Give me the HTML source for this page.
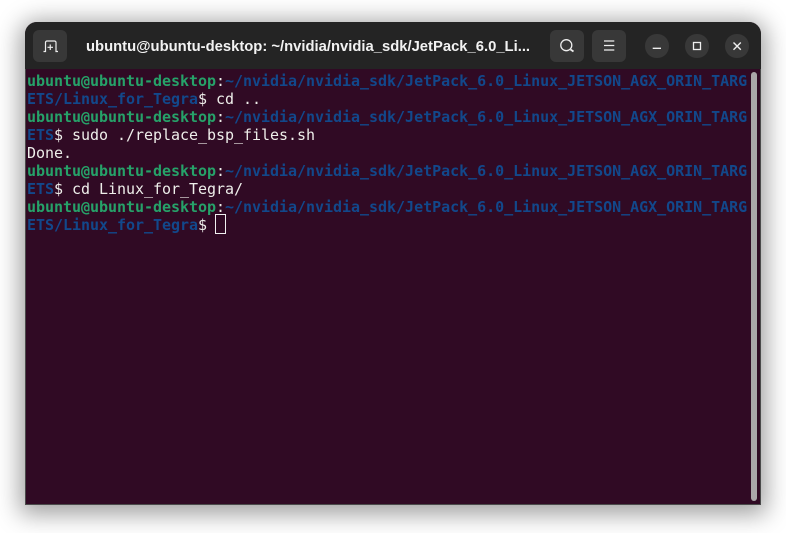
<!DOCTYPE html>
<html><head><meta charset="utf-8">
<style>
html,body{margin:0;padding:0;background:#fff;width:786px;height:533px;overflow:hidden}
.win{position:absolute;left:25px;top:22px;width:736px;height:483px;border-radius:12px 12px 0 0;background:#300a24;box-shadow:0 4px 24px 5px rgba(0,0,0,.38);overflow:hidden}
.edge{position:absolute;left:0;top:47px;width:734px;height:435px;border:1px solid #4a4a4a;border-top:0}
.bar{position:absolute;left:0;top:0;width:736px;height:47px;background:#242424}
.btn{position:absolute;top:8px;width:34px;height:32px;background:#383838;border-radius:6px}
.c{position:absolute;top:12.3px;width:23.4px;height:23.4px;border-radius:50%;background:#383838}
svg{position:absolute;left:0;top:0}
.title{position:absolute;left:61px;top:16px;width:450px;font:bold 14.8px/18px "Liberation Sans",sans-serif;color:#f2f2f2;white-space:nowrap}
pre{position:absolute;left:2px;top:50px;margin:0;font:15px/18px "DejaVu Sans Mono","Liberation Mono",monospace;letter-spacing:-.03px;color:#eeeeea;white-space:pre}
b.g{color:#26a269;font-weight:bold}
b.b{color:#12488b;font-weight:bold}
.cur{position:absolute;left:190px;top:192px;width:9px;height:18px;border:1px solid #f0f0f0}
.sb{position:absolute;left:726px;top:50px;width:6px;height:429px;border-radius:3px;background:#aaa6a9}
</style></head><body>
<div class="win">
<div class="bar"></div>
<div class="edge"></div>
<div class="btn" style="left:8px"></div>
<div class="btn" style="left:525px"></div>
<div class="btn" style="left:567px"></div>
<div class="c" style="left:620.3px"></div>
<div class="c" style="left:660.3px"></div>
<div class="c" style="left:700.3px"></div>
<svg width="736" height="47" fill="none" stroke="#eeeeee" stroke-width="1.200">
<path d="M18.500 29.500h2V20.500a1.500 1.500 0 0 1 1.500-1.500h7.500a1.500 1.500 0 0 1 1.500 1.500v9h2"/>
<path d="M22.500 25.300h5.500M25.250 22.500v5.500"/>
<circle cx="541.300" cy="23.200" r="5.500" stroke-width="1.300"/>
<path d="M545.500 27.500l3 2" stroke-width="1.800"/>
<path d="M579 19h10.300M579 23.500h10.300M579 28h10.300"/>
<path d="M627.700 26.300h8.300" stroke-width="1.300"/>
<rect x="668.500" y="20.500" width="7" height="7" stroke-width="1.300"/>
<path d="M708.500 20.500l7.300 7.300M715.800 20.500l-7.300 7.300" stroke-width="1.400"/>
</svg>
<div class="title">ubuntu@ubuntu-desktop: ~/nvidia/nvidia_sdk/JetPack_6.0_Li...</div>
<pre><b class="g">ubuntu@ubuntu-desktop</b>:<b class="b">~/nvidia/nvidia_sdk/JetPack_6.0_Linux_JETSON_AGX_ORIN_TARG</b>
<b class="b">ETS/Linux_for_Tegra</b>$ cd ..
<b class="g">ubuntu@ubuntu-desktop</b>:<b class="b">~/nvidia/nvidia_sdk/JetPack_6.0_Linux_JETSON_AGX_ORIN_TARG</b>
<b class="b">ETS</b>$ sudo ./replace_bsp_files.sh
Done.
<b class="g">ubuntu@ubuntu-desktop</b>:<b class="b">~/nvidia/nvidia_sdk/JetPack_6.0_Linux_JETSON_AGX_ORIN_TARG</b>
<b class="b">ETS</b>$ cd Linux_for_Tegra/
<b class="g">ubuntu@ubuntu-desktop</b>:<b class="b">~/nvidia/nvidia_sdk/JetPack_6.0_Linux_JETSON_AGX_ORIN_TARG</b>
<b class="b">ETS/Linux_for_Tegra</b>$ </pre>
<div class="cur"></div>
<div class="sb"></div>
</div>
</body></html>
